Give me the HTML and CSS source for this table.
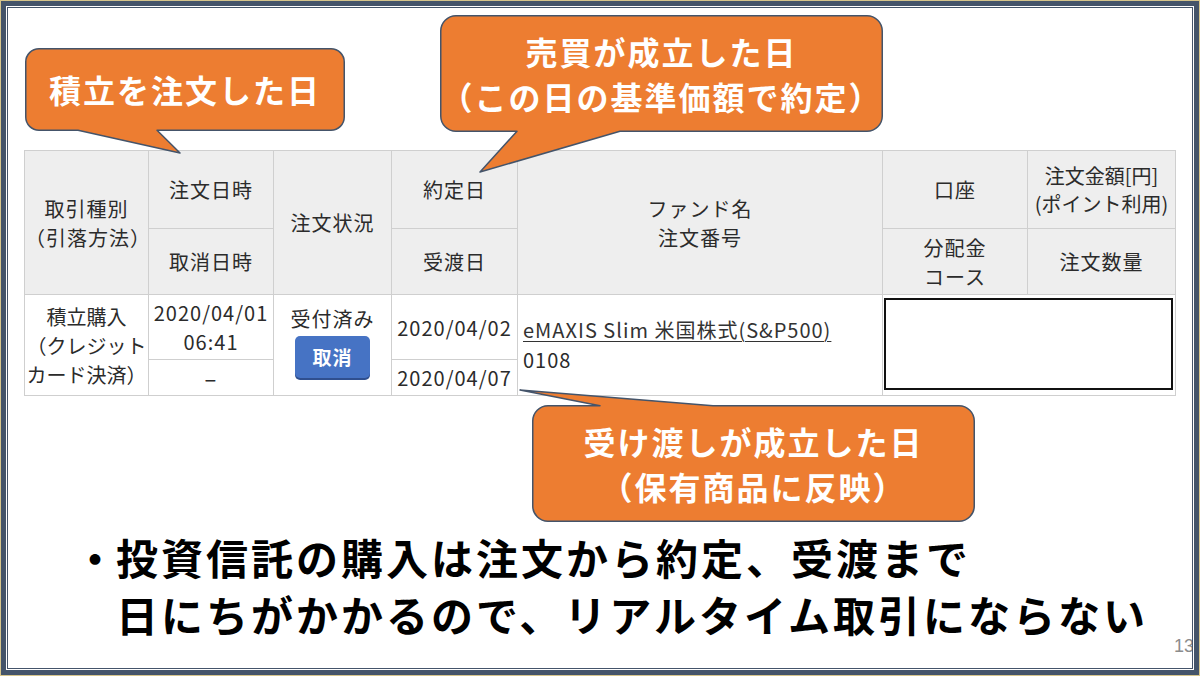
FILE: index.html
```html
<!DOCTYPE html>
<html lang="ja">
<head>
<meta charset="utf-8">
<title>投資信託の注文状況</title>
<link rel="stylesheet" href="styles.css">
</head>
<body>
<div class="slide">
  <div class="frame">
    <div class="canvas">
      <table class="orders">
        <colgroup>
          <col class="w124"><col class="w125"><col class="w118"><col class="w126"><col class="w365"><col class="w145"><col class="w148">
        </colgroup>
        <thead>
          <tr class="h1">
            <th rowspan="2">取引種別<br>（引落方法）</th>
            <th>注文日時</th>
            <th rowspan="2">注文状況</th>
            <th>約定日</th>
            <th rowspan="2">ファンド名<br>注文番号</th>
            <th>口座</th>
            <th class="amount">注文金額[円]<br>(ポイント利用)</th>
          </tr>
          <tr class="h2">
            <th>取消日時</th>
            <th>受渡日</th>
            <th>分配金<br>コース</th>
            <th>注文数量</th>
          </tr>
        </thead>
        <tbody>
          <tr class="b1">
            <td rowspan="2" class="kind">積立購入<br>（クレジット<br>カード決済）</td>
            <td>2020/04/01<br>06:41</td>
            <td rowspan="2" class="status">受付済み<span class="btn">取消</span></td>
            <td>2020/04/02</td>
            <td rowspan="2" class="fund"><a class="fund-link">eMAXIS Slim 米国株式(S&amp;P500)</a><br>0108</td>
            <td rowspan="2" colspan="2" class="masked"><div class="mask"></div></td>
          </tr>
          <tr class="b2">
            <td class="dash">–</td>
            <td>2020/04/07</td>
          </tr>
        </tbody>
      </table>

      <div class="point">
        <span class="bullet">・</span>
        <p class="point-text">投資信託の購入は注文から約定、受渡まで<br>日にちがかかるので、リアルタイム取引にならない</p>
      </div>

      <div class="callout c-order">
        <svg class="shape" width="320" height="105" viewBox="0 0 320 105">
          <path d="M14,0.75 H306 A13.25,13.25 0 0 1 319.25,14 V69 A13.25,13.25 0 0 1 306,82.25 H132 L155,105 L53,82.25 H14 A13.25,13.25 0 0 1 0.75,69 V14 A13.25,13.25 0 0 1 14,0.75 Z"/>
        </svg>
        <span class="ctext">積立を注文した日</span>
      </div>

      <div class="callout c-trade">
        <svg class="shape" width="443" height="157" viewBox="0 0 443 157">
          <path d="M16,0.75 H427 A15.25,15.25 0 0 1 442.25,16 V101 A15.25,15.25 0 0 1 427,116.25 H180 L40,157 L77,116.25 H16 A15.25,15.25 0 0 1 0.75,101 V16 A15.25,15.25 0 0 1 16,0.75 Z"/>
        </svg>
        <span class="ctext">売買が成立した日<br>（この日の基準価額で約定）</span>
      </div>

      <div class="callout c-settle">
        <svg class="shape" width="443" height="117" viewBox="0 0 443 117">
          <path d="M16,0.75 H68 L-12,-15 L181,0.75 H427 A15.25,15.25 0 0 1 442.25,16 V101 A15.25,15.25 0 0 1 427,116.25 H16 A15.25,15.25 0 0 1 0.75,101 V16 A15.25,15.25 0 0 1 16,0.75 Z"/>
        </svg>
        <span class="ctext">受け渡しが成立した日<br>（保有商品に反映）</span>
      </div>

      <span class="page-no">13</span>
    </div>
  </div>
</div>
</body>
</html>
```

FILE: styles.css
```css
* { box-sizing: border-box; }

html, body {
  margin: 0;
  padding: 0;
  background: #ffffff;
}

body {
  font-family: "Noto Sans CJK JP", "Noto Sans", sans-serif;
  color: #333333;
}

.slide {
  width: 1200px;
  height: 676px;
  border: 1px solid #d6c58c;
  padding: 5px;
  background: #44546a;
}

.frame {
  height: 100%;
  border: 1px solid #ffffff;
}

.canvas {
  position: relative;
  height: 100%;
  border: 1px solid #44546a;
  background: #ffffff;
  overflow: hidden;
}

/* ---------- table ---------- */
.orders {
  margin: 142px 0 0 16px;
  width: 1151px;
  table-layout: fixed;
  border-collapse: collapse;
  font-size: 20px;
  letter-spacing: 1px;
  line-height: 29px;
  color: #2b2b2b;
}

.w124 { width: 124px; }
.w125 { width: 125px; }
.w118 { width: 118px; }
.w126 { width: 126px; }
.w365 { width: 365px; }
.w145 { width: 145px; }
.w148 { width: 148px; }

.orders th,
.orders td {
  border: 1px solid #cfcfcf;
  padding: 0;
  text-align: center;
  vertical-align: middle;
  font-weight: 400;
  white-space: nowrap;
}

.orders th {
  background: #eeeeee;
}

.orders td {
  background: #ffffff;
}

.h1 { height: 78px; }
.h2 { height: 66px; }
.b1 { height: 65px; }
.b2 { height: 36px; }

.orders th.amount {
  line-height: 28px;
  letter-spacing: 0;
}

.orders td.kind {
  letter-spacing: 0;
  line-height: 29px;
}

.orders td.status {
  line-height: 29px;
  padding-bottom: 8px;
}

.orders td.dash {
  font-size: 22px;
}

.btn {
  display: block;
  width: 75px;
  height: 42px;
  margin: 3px auto 0;
  border-radius: 5px;
  background: #4673c4;
  box-shadow: 0 2px 0 #2f4f8f;
  color: #ffffff;
  font-weight: 700;
  font-size: 19px;
  line-height: 42px;
  letter-spacing: 1px;
}

.orders td.fund {
  text-align: left;
  padding-left: 5px;
  line-height: 30px;
}

.fund-link {
  color: #333333;
  text-decoration: underline;
  text-underline-offset: 3px;
  text-decoration-thickness: 1px;
}

.orders td.masked {
  padding: 3px 2px 4px 1px;
  vertical-align: top;
}

.mask {
  height: 92px;
  border: 2px solid #111111;
  background: #ffffff;
}

/* ---------- bullet text ---------- */
.point {
  display: flex;
  align-items: flex-start;
  margin: 132px 0 0 66px;
  color: #000000;
  font-size: 42px;
  font-weight: 700;
  line-height: 57px;
}

.bullet {
  flex: 0 0 42px;
  width: 42px;
}

.point-text {
  margin: 0;
  letter-spacing: 3px;
}

/* ---------- callouts ---------- */
.callout {
  position: absolute;
  display: flex;
  align-items: center;
  justify-content: center;
  color: #ffffff;
  font-weight: 700;
  font-size: 32px;
  letter-spacing: 2px;
  line-height: 45px;
  text-align: center;
}

.shape {
  position: absolute;
  left: 0;
  top: 0;
  overflow: visible;
}

.shape path {
  fill: #ed7d31;
  stroke: #44546a;
  stroke-width: 1.5;
  stroke-linejoin: round;
}

.ctext {
  position: relative;
}

.c-order {
  left: 17px;
  top: 40px;
  width: 320px;
  height: 83px;
}

.c-trade {
  left: 432px;
  top: 7px;
  width: 443px;
  height: 117px;
}

.c-settle {
  left: 524px;
  top: 397px;
  width: 443px;
  height: 117px;
}

.page-no {
  position: absolute;
  left: 1166px;
  top: 628px;
  font-family: "Liberation Sans", sans-serif;
  font-size: 18px;
  color: #8c8c8c;
}
```
